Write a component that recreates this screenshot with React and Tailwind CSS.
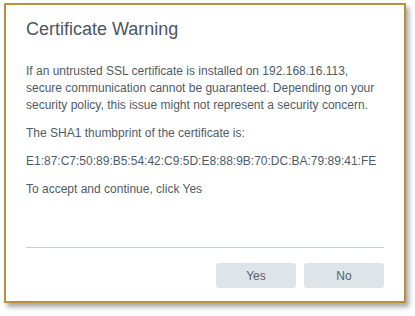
import React from "react";

const App = () => {
  return (
    <div className="w-[415px] h-[316px] bg-white overflow-hidden" style={{ fontFamily: '"Liberation Sans", Arial, sans-serif' }}>
      <div className="ml-[4px] mt-[3px] w-[402px] h-[300px] border-2 border-[#b8913c] bg-white shadow-[3px_4px_5px_rgba(0,0,0,0.35)] flex flex-col pl-[20px] pr-[20px]">
        <h1 className="mt-[12px] text-[18px] leading-[24px] text-[#4b5663]">Certificate Warning</h1>

        <div className="mt-[22px] text-[12px] leading-[17px] text-[#4f5b67]">
          <p>
            If an untrusted SSL certificate is installed on 192.168.16.113,
            secure communication cannot be guaranteed. Depending on your
            security policy, this issue might not represent a security concern.
          </p>
          <p className="mt-[11px]">The SHA1 thumbprint of the certificate is:</p>
          <p className="mt-[11px]">E1:87:C7:50:89:B5:54:42:C9:5D:E8:88:9B:70:DC:BA:79:89:41:FE</p>
          <p className="mt-[11px]">To accept and continue, click Yes</p>
        </div>

        <div className="mt-auto border-t border-[#c9ced3]" />

        <div className="flex justify-end gap-[8px] mt-[15px] mb-[13px]">
          <button className="w-[80px] h-[25px] rounded-[3px] bg-[#dfe4e8] text-[12px] text-[#56616c]">Yes</button>
          <button className="w-[80px] h-[25px] rounded-[3px] bg-[#dfe4e8] text-[12px] text-[#56616c]">No</button>
        </div>
      </div>
    </div>
  );
};

export default App;
